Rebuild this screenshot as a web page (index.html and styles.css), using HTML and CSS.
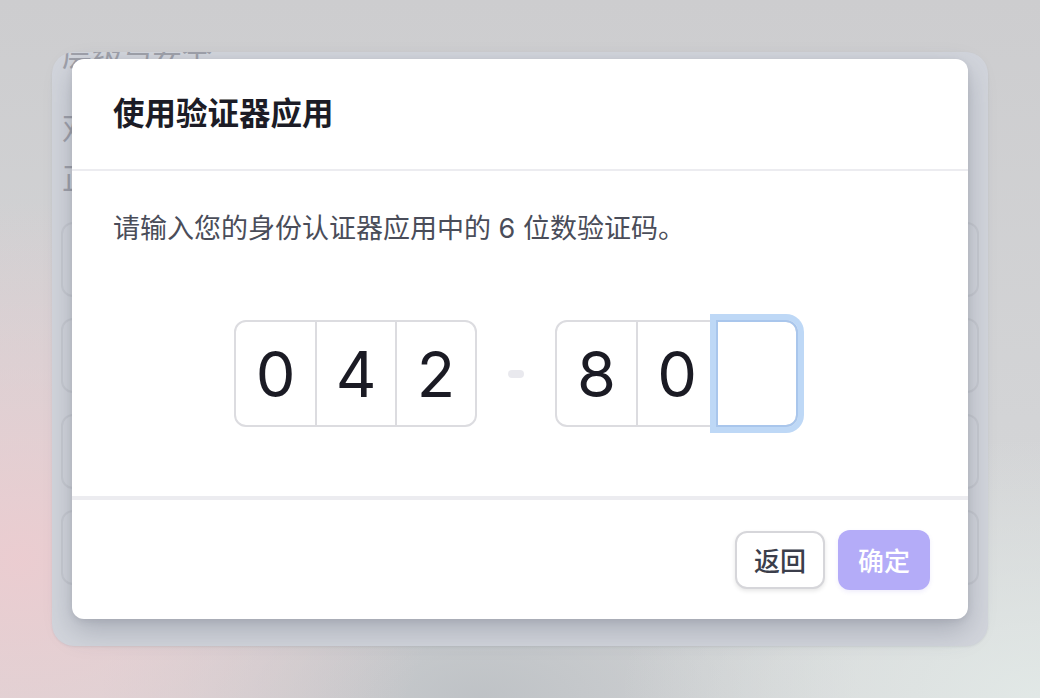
FILE: index.html
```html
<!DOCTYPE html>
<html lang="zh-CN">
<head>
<meta charset="utf-8">
<title>使用验证器应用</title>
<link rel="stylesheet" href="styles.css">
</head>
<body>
<div class="page">
  <div class="bg-card">
    <div class="bg-line bg-line-first">层级与安全</div>
    <div class="bg-line bg-line-second">双重验证</div>
    <div class="bg-line bg-line-third">正在使用的方式</div>
    <div class="bg-rows">
      <div class="bg-row"></div>
      <div class="bg-row"></div>
      <div class="bg-row"></div>
      <div class="bg-row"></div>
    </div>
  </div>

  <div class="modal" role="dialog" aria-labelledby="modal-title">
    <div class="modal-header">
      <h2 id="modal-title" class="modal-title">使用验证器应用</h2>
    </div>
    <div class="modal-body">
      <p class="modal-text">请输入您的身份认证器应用中的 6 位数验证码。</p>
      <div class="otp">
        <div class="otp-group">
          <div class="otp-cell">0</div>
          <div class="otp-cell">4</div>
          <div class="otp-cell">2</div>
        </div>
        <div class="otp-sep"></div>
        <div class="otp-group">
          <div class="otp-cell">8</div>
          <div class="otp-cell">0</div>
          <div class="otp-cell otp-cell-focus"></div>
        </div>
      </div>
    </div>
    <div class="modal-footer">
      <button class="btn btn-secondary" type="button">返回</button>
      <button class="btn btn-primary" type="button">确定</button>
    </div>
  </div>
</div>
</body>
</html>
```

FILE: styles.css
```css
* { box-sizing: border-box; }

html, body {
  margin: 0;
  padding: 0;
}

body {
  width: 1040px;
  height: 698px;
  overflow: hidden;
  font-family: "Inter", "Noto Sans CJK SC", sans-serif;
}

.page {
  position: relative;
  width: 1040px;
  height: 698px;
  padding: 52px;
  background:
    radial-gradient(ellipse 420px 360px at 20px 560px, rgba(236, 204, 208, 0.95), rgba(236, 204, 208, 0) 100%),
    radial-gradient(ellipse 420px 260px at 1040px 698px, rgba(226, 233, 231, 0.95), rgba(226, 233, 231, 0) 100%),
    radial-gradient(ellipse 380px 200px at 480px 698px, rgba(188, 192, 196, 0.9), rgba(188, 192, 196, 0) 100%),
    linear-gradient(180deg, #cdcdcf 0%, #d3d4d6 60%, #d6d7d8 100%);
}

/* background (dimmed) card */
.bg-card {
  width: 936px;
  height: 594px;
  border-radius: 22px;
  background: #d2d5dc;
  overflow: hidden;
  padding: 0 9px;
  box-shadow: 0 1px 2px rgba(120, 125, 140, 0.15);
}

.bg-line {
  font-size: 30px;
  line-height: 40px;
  color: #9ea0a9;
  padding-left: 1px;
}

.bg-line-first { margin-top: -17px; }
.bg-line-second { margin-top: 33px; }
.bg-line-third { margin-top: 10px; }

.bg-rows {
  margin-top: 24px;
  display: flex;
  flex-direction: column;
  gap: 21px;
}

.bg-row {
  height: 75px;
  border: 2px solid #c7cad1;
  border-radius: 12px;
}

/* modal */
.modal {
  position: absolute;
  left: 72px;
  top: 59px;
  width: 896px;
  height: 560px;
  background: #ffffff;
  border-radius: 12px;
  box-shadow: 0 12px 28px rgba(70, 76, 92, 0.28), 0 2px 6px rgba(70, 76, 92, 0.12);
  display: flex;
  flex-direction: column;
}

.modal-header {
  height: 112px;
  padding: 0 41px;
  display: flex;
  align-items: center;
  border-bottom: 2px solid #ececf0;
}

.modal-title {
  margin: 0;
  font-size: 31.5px;
  line-height: 40px;
  font-weight: 600;
  color: #1c1c26;
}

.modal-body {
  padding: 40px 41px 0;
  height: 325px;
}

.modal-text {
  margin: 0;
  font-size: 27px;
  line-height: 36px;
  color: #4a4d59;
}

.otp {
  margin-top: 73px;
  display: flex;
  align-items: center;
  justify-content: center;
  gap: 31px;
  padding-right: 8px;
}

.otp-group {
  display: flex;
  height: 107px;
  border: 2px solid #dcdce0;
  border-radius: 12px;
}

.otp-cell {
  width: 80px;
  display: flex;
  align-items: center;
  justify-content: center;
  font-family: "Inter", "Liberation Sans", sans-serif;
  font-size: 63px;
  font-weight: 400;
  color: #1b1b24;
  border-left: 2px solid #dcdce0;
}

.otp-cell:first-child {
  border-left: none;
  width: 79px;
}

.otp-cell-focus {
  width: 82px;
  margin: -2px -2px -2px 0;
  border: 2px solid #a9c6ec;
  border-radius: 0 12px 12px 0;
  box-shadow: 0 0 0 6px #bed8f6;
}

.otp-sep {
  width: 16px;
  height: 8px;
  border-radius: 4px;
  background: #e9e9ee;
}

.modal-footer {
  flex: 1;
  border-top: 4px solid #ececf0;
  display: flex;
  align-items: center;
  justify-content: flex-end;
  gap: 13px;
  padding: 0 38px 0 0;
}

.btn {
  font-family: "Noto Sans CJK SC", sans-serif;
  font-size: 26px;
  line-height: 34px;
  font-weight: 500;
  border-radius: 12px;
  cursor: pointer;
}

.btn-secondary {
  width: 90px;
  height: 58px;
  background: #ffffff;
  color: #3b3e4b;
  border: 2px solid #d6d6da;
  box-shadow: 0 2px 4px rgba(0, 0, 0, 0.1);
}

.btn-primary {
  width: 92px;
  height: 60px;
  background: #b4acf8;
  color: #ffffff;
  border: none;
  box-shadow: 0 2px 4px rgba(120, 110, 220, 0.12);
}
```
